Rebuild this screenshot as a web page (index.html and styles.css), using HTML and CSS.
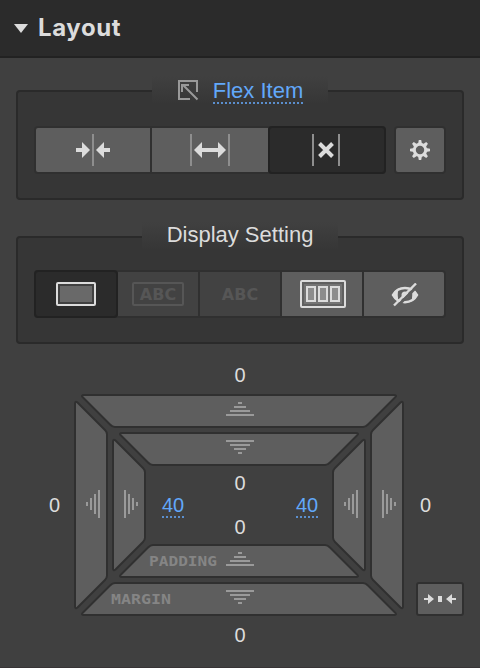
FILE: index.html
```html
<!DOCTYPE html>
<html lang="en">
<head>
<meta charset="utf-8">
<title>Layout</title>
<link rel="stylesheet" href="styles.css">
</head>
<body>
<main class="panel">
  <header class="panel-header">
    <svg class="caret" width="14" height="9" viewBox="0 0 14 9"><path d="M0 0H14L7 9Z"/></svg>
    <h1>Layout</h1>
  </header>
  <section class="group flex-group">
    <div class="legend">
      <svg width="22" height="22" viewBox="0 0 22 22" fill="none" stroke="#999" stroke-width="2"><path d="M20 13V2H2V20H13M5 13V6H12M6 6L20.500 20.500"/></svg>
      <a class="link">Flex Item</a>
    </div>
    <div class="flex-row">
      <div class="segments sizing">
        <button><svg width="36" height="32" viewBox="0 0 36 32"><path class="rule" d="M17 0h2v32h-2z"/><path d="M1 14h6V8l8 8-8 8v-6H1zM35 14h-6V8l-8 8 8 8v-6h6z"/></svg></button>
        <button><svg width="40" height="32" viewBox="0 0 40 32"><path class="rule" d="M0 0h2v32H0zM38 0h2v32h-2z"/><path d="M4 16l8-8v6h16V8l8 8-8 8v-6H12v6z"/></svg></button>
        <button class="active"><svg width="30" height="32" viewBox="0 0 30 32"><path class="rule" d="M0 0h2v32H0zM26 0h2v32h-2z"/><path d="M7.500 9.500l13 13M20.500 9.500l-13 13" stroke="#dcdcdc" stroke-width="4"/></svg></button>
      </div>
      <button class="gear"><svg width="20" height="20" viewBox="-10 -10 20 20"><circle r="5.700" fill="none" stroke="#dcdcdc" stroke-width="3"/><g id="teeth"><path d="M-2-6L-1.200-10h2.400L2-6zM-2 6L-1.200 10h2.400L2 6zM-6-2L-10-1.200v2.400L-6 2zM6-2L10-1.200v2.400L6 2z"/></g><use href="#teeth" transform="rotate(45)"/></svg></button>
    </div>
  </section>
  <section class="group display-group">
    <div class="legend">Display Setting</div>
    <div class="segments display">
      <button class="active"><svg width="40" height="24" viewBox="0 0 40 24"><rect x="1" y="1" width="38" height="22" rx="1" fill="#404040" stroke="#dcdcdc" stroke-width="2"/><path d="M4 4h32v16H4z" fill="#696969"/></svg></button>
      <button class="disabled"><span class="abc boxed">ABC</span></button>
      <button class="disabled"><span class="abc">ABC</span></button>
      <button class="shift"><svg width="46" height="28" viewBox="0 0 46 28"><rect x="1" y="1" width="44" height="26" rx="1" fill="#606060" stroke="#dcdcdc" stroke-width="2"/><path d="M4 4h38v20H4z" fill="#747474"/><path d="M7 7h8v14H7zM19 7h8v14h-8zM31 7h8v14h-8z" fill="#8d8d8d" stroke="#dcdcdc" stroke-width="2"/></svg></button>
      <button class="shift eye"><svg width="28" height="24" viewBox="0 0 28 24"><path d="M2 12C7 2.500 21 2.500 26 12 21 21.500 7 21.500 2 12Z" fill="none" stroke="#dcdcdc" stroke-width="2.500"/><path d="M1 12Q4 7 8 5Q5.500 12 8 19Q4 17 1 12ZM27 12Q24 7 20 5Q22.500 12 20 19Q24 17 27 12Z"/><circle cx="14" cy="12" r="3.500"/><path d="M5 24.500L27 2.500" stroke="#5e5e5e" stroke-width="3"/><path d="M3 22.500L25 .5" stroke="#dcdcdc" stroke-width="2.400"/></svg></button>
    </div>
  </section>
  <section class="spacing">
    <svg class="box-model" width="480" height="324" viewBox="0 344 480 324">
      <g class="sides">
        <path d="M84 395H394Q397 395 395.500 397L368 424.500Q365.500 427 363 427H115Q112.500 427 110 424.500L82.500 397Q81 395 84 395Z"/>
        <path d="M84 615H394Q397 615 395.500 613L368 585.500Q365.500 583 363 583H115Q112.500 583 110 585.500L82.500 613Q81 615 84 615Z"/>
        <path d="M75 404Q75 400.500 77.500 402.500L105 430Q107 432 107 434.500V575.500Q107 578 105 580L77.500 607.500Q75 609.500 75 606Z"/>
        <path d="M403 404Q403 400.500 400.500 402.500L373 430Q371 432 371 434.500V575.500Q371 578 373 580L400.500 607.500Q403 609.500 403 606Z"/>
        <path d="M122 433H356Q359 433 357.500 435L330 462.500Q327.500 465 325 465H153Q150.500 465 148 462.500L120.500 435Q119 433 122 433Z"/>
        <path d="M122 577H356Q359 577 357.500 575L330 547.500Q327.500 545 325 545H153Q150.500 545 148 547.500L120.500 575Q119 577 122 577Z"/>
        <path d="M113 442Q113 438.500 115.500 440.500L143 468Q145 470 145 472.500V537.500Q145 540 143 542L115.500 569.500Q113 571.500 113 568Z"/>
        <path d="M365 442Q365 438.500 362.500 440.500L335 468Q333 470 333 472.500V537.500Q333 540 335 542L362.500 569.500Q365 571.500 365 568Z"/>
        <rect x="417" y="583" width="46" height="32" rx="2"/>
      </g>
      <g class="grips">
        <path d="M238 402h4v2h-4zM234 406h12v2h-12zM230 410h20v2h-20zM226 414h28v2h-28z"/>
        <path d="M226 440h28v2h-28zM230 444h20v2h-20zM234 448h12v2h-12zM238 452h4v2h-4z"/>
        <path d="M238 552h4v2h-4zM234 556h12v2h-12zM230 560h20v2h-20zM226 564h28v2h-28z"/>
        <path d="M226 590h28v2h-28zM230 594h20v2h-20zM234 598h12v2h-12zM238 602h4v2h-4z"/>
        <path d="M86 502h2v4h-2zM90 498h2v12h-2zM94 494h2v20h-2zM98 490h2v28h-2z"/>
        <path d="M124 490h2v28h-2zM128 494h2v20h-2zM132 498h2v12h-2zM136 502h2v4h-2z"/>
        <path d="M344 502h2v4h-2zM348 498h2v12h-2zM352 494h2v20h-2zM356 490h2v28h-2z"/>
        <path d="M382 490h2v28h-2zM386 494h2v20h-2zM390 498h2v12h-2zM394 502h2v4h-2z"/>
      </g>
      <path class="bright" d="M424 598h4v-4l6 5-6 5v-4h-4zM456 598h-4v-4l-6 5 6 5v-4h4zM438 596h4v6h-4z"/>
      <g class="side-label">
        <text x="149" y="566" textLength="68" lengthAdjust="spacingAndGlyphs">PADDING</text>
        <text x="111" y="604" textLength="60" lengthAdjust="spacingAndGlyphs">MARGIN</text>
      </g>
      <g class="value">
        <text x="240" y="382">0</text>
        <text x="240" y="490">0</text>
        <text x="240" y="534">0</text>
        <text x="240" y="642">0</text>
        <text x="54.500" y="512">0</text>
        <text x="425.500" y="512">0</text>
        <text class="set" x="173" y="512">40</text>
        <text class="set" x="307" y="512">40</text>
      </g>
      <path class="dots" d="M162 517h22M296 517h22"/>
    </svg>
  </section>
</main>
</body>
</html>
```

FILE: styles.css
```css
* { box-sizing: border-box; }
body { margin: 0; background: #404040; color: #dcdcdc; font-family: "Liberation Sans", Arial, sans-serif; }
.panel { width: 480px; height: 668px; display: flex; flex-direction: column; overflow: hidden; border-bottom: 1px solid #383436; }
.panel-header { height: 58px; flex: none; display: flex; align-items: center; gap: 10px; padding-left: 14px; background: #2b2b2b; border-bottom: 2px solid #222; }
.panel-header h1 { margin: 0; font: 650 24px/30px Inter, sans-serif; letter-spacing: .6px; }
.caret { fill: #dcdcdc; }
.group { width: 448px; flex: none; margin-left: 16px; border: 2px solid #2a2a2a; border-radius: 4px; background: #363636; display: flex; flex-direction: column; align-items: center; }
.flex-group { height: 110px; margin-top: 32px; }
.display-group { height: 108px; margin-top: 36px; }
.legend { flex: none; height: 28px; margin-top: -16px; display: flex; align-items: center; justify-content: center; background: linear-gradient(#404040, #363636); font-size: 22px; line-height: 26px; white-space: nowrap; }
.flex-group .legend { width: 176px; gap: 14px; }
.display-group .legend { width: 196px; padding-bottom: 2px; }
.link { color: #62a8fa; height: 28px; line-height: 30px; background: repeating-linear-gradient(90deg, #5b8fce 0 2px, transparent 2px 4px) left bottom / 100% 2px no-repeat; }
.flex-row { display: flex; gap: 8px; margin-top: 22px; }
.segments { display: grid; height: 48px; border: 2px solid #303030; border-radius: 4px; background: #303030; column-gap: 2px; }
.sizing { width: 352px; grid-template-columns: 114px 116px 114px; }
.display { width: 412px; margin-top: 20px; grid-template-columns: 80px repeat(4, 80px); }
button { display: flex; align-items: center; justify-content: center; padding: 0; border: 0; background: #5e5e5e; color: inherit; }
button svg { display: block; fill: #dcdcdc; }
button:first-child { border-radius: 2px 0 0 2px; }
button:last-child { border-radius: 0 2px 2px 0; }
button.active { background: #2b2b2b; outline: 2px solid #222; border-radius: 2px; }
button.disabled { background: #424242; }
button.shift { padding-left: 2px; }
button.eye { padding-top: 2px; }
.gear { width: 52px; height: 48px; border: 2px solid #303030; }
button.gear { border-radius: 4px; }
.rule { fill: #8e8e8e; }
.abc { color: #565656; font: bold 16px/22px "DejaVu Sans", sans-serif; padding-top: 1px; }
.boxed { width: 52px; height: 24px; border: 2px solid #565656; border-radius: 2px; text-align: center; line-height: 20px; }
.spacing { flex: 1; }
.box-model { display: block; }
.sides { fill: #5e5e5e; stroke: #303030; stroke-width: 2; stroke-linejoin: round; }
.grips { fill: #9a9a9a; }
.bright { fill: #dcdcdc; }
.side-label { fill: #858585; font: bold 13.5px "DejaVu Sans Mono", monospace; }
.value { fill: #dcdcdc; font: 20px "Liberation Sans", Arial, sans-serif; text-anchor: middle; }
.value .set { fill: #62a8fa; }
.dots { stroke: #5b8fce; stroke-width: 2; stroke-dasharray: 2 2; }
```
